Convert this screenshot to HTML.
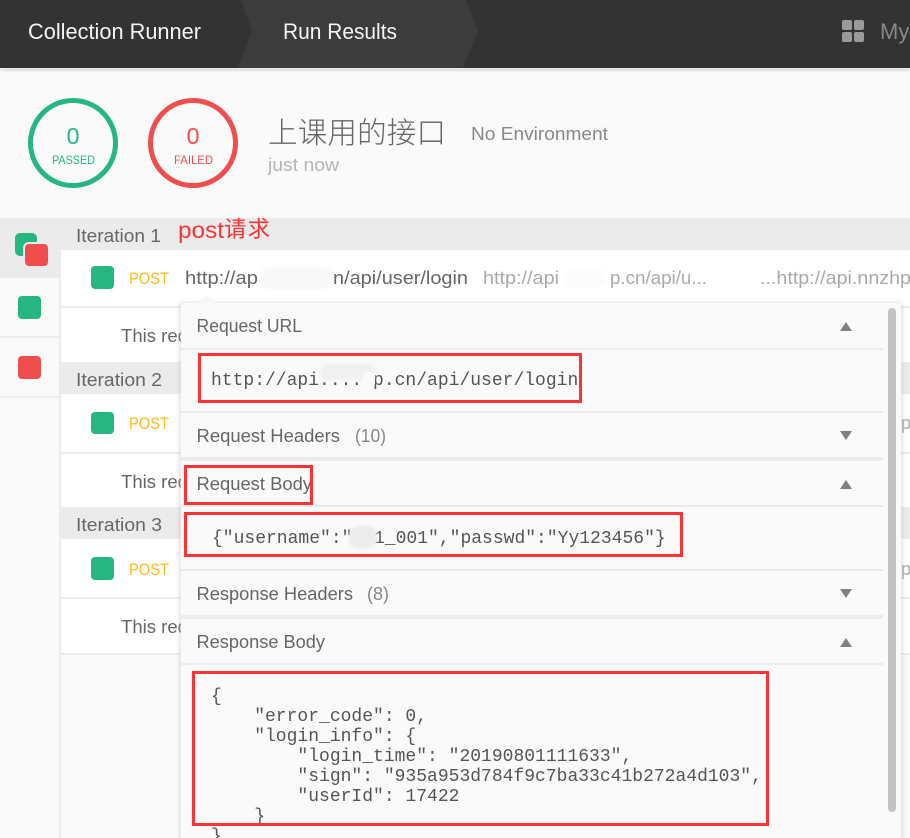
<!DOCTYPE html>
<html><head><meta charset="utf-8"><title>Run Results</title>
<style>
html,body{margin:0;padding:0;width:910px;height:838px;overflow:hidden;background:#fafafa}
svg{display:block}
text{font-family:"Liberation Sans","Noto Sans CJK SC",sans-serif;font-size:18px;fill:#5a5a5a}
.h{font-size:18px;fill:#666}
.m{font-family:"Liberation Mono",monospace;font-size:18px;fill:#555}
.p{font-size:16.5px;fill:#ffb81c}
.g{fill:#25b681}.r{fill:#f04e4c}
.l{fill:#aaa}
</style></head><body>
<svg width="910" height="838" viewBox="0 0 910 838" xmlns="http://www.w3.org/2000/svg">
<defs>
<filter id="b" x="-30%" y="-30%" width="160%" height="160%"><feGaussianBlur stdDeviation="1.5"/></filter>
<filter id="s" x="-5%" y="-5%" width="110%" height="110%"><feGaussianBlur stdDeviation="2"/></filter>
</defs>
<rect width="910" height="838" fill="#fafafa"/>
<!-- header -->
<rect y="68" width="910" height="3" fill="#d0d0d0" filter="url(#s)"/>
<rect width="910" height="68" fill="#333"/>
<polygon points="241,0 466,0 478,31 463,68 238,68 252,31" fill="#3c3c3c"/>
<text x="28" y="39" textLength="173" lengthAdjust="spacingAndGlyphs" style="font-size:22px;fill:#f4f4f4">Collection Runner</text>
<text x="283" y="39" textLength="114" lengthAdjust="spacingAndGlyphs" style="font-size:22px;fill:#f4f4f4">Run Results</text>
<rect x="842" y="20" width="10" height="10" rx="2" fill="#9a9a9a"/><rect x="854" y="20" width="10" height="10" rx="2" fill="#9a9a9a"/>
<rect x="842" y="32" width="10" height="10" rx="2" fill="#9a9a9a"/><rect x="854" y="32" width="10" height="10" rx="2" fill="#9a9a9a"/>
<text x="880" y="39" style="font-size:22px;fill:#888">My</text>
<!-- summary -->
<circle cx="73" cy="143" r="42.5" fill="none" stroke="#25b681" stroke-width="5"/>
<circle cx="193" cy="143" r="42.5" fill="none" stroke="#f04e4c" stroke-width="5"/>
<text x="73" y="144" text-anchor="middle" class="g" style="font-size:23px">0</text>
<text x="193" y="144" text-anchor="middle" class="r" style="font-size:23px">0</text>
<text x="52" y="164" textLength="43" lengthAdjust="spacingAndGlyphs" class="g" style="font-size:12px">PASSED</text>
<text x="174" y="164" textLength="39" lengthAdjust="spacingAndGlyphs" class="r" style="font-size:12px">FAILED</text>
<text x="268" y="143" textLength="178" style="font-size:29.5px;font-weight:300;fill:#666">上课用的接口</text>
<text x="471" y="140" textLength="137" lengthAdjust="spacingAndGlyphs" style="fill:#888">No Environment</text>
<text x="268" y="171" textLength="71" lengthAdjust="spacingAndGlyphs" style="fill:#b5b5b5">just now</text>
<!-- sidebar -->
<rect x="0" y="218" width="910" height="32" fill="#ebebeb"/>
<rect x="0" y="250" width="61" height="28" fill="#ebebeb"/>
<rect x="59" y="278" width="2" height="560" fill="#ececec"/>
<rect x="0" y="336" width="59" height="2" fill="#ececec"/>
<rect x="0" y="396" width="59" height="2" fill="#ececec"/>
<rect x="15" y="233" width="22" height="23" rx="5" fill="#25b681"/>
<rect x="23" y="242" width="27" height="26" rx="6" fill="#ebebeb"/>
<rect x="25" y="244" width="23" height="22" rx="4" fill="#f04e4c"/>
<rect x="18" y="296" width="23" height="23" rx="4" fill="#25b681"/>
<rect x="18" y="356" width="23" height="23" rx="4" fill="#f04e4c"/>
<!-- rows -->
<rect x="61" y="250" width="849" height="56" fill="#fff"/>
<rect x="61" y="306" width="849" height="2" fill="#ececec"/>
<rect x="61" y="308" width="849" height="54" fill="#fff"/>
<rect x="61" y="362" width="849" height="32" fill="#ebebeb"/>
<rect x="61" y="394" width="849" height="58" fill="#fff"/>
<rect x="61" y="452" width="849" height="2" fill="#ececec"/>
<rect x="61" y="454" width="849" height="53" fill="#fff"/>
<rect x="61" y="507" width="849" height="32" fill="#ebebeb"/>
<rect x="61" y="539" width="849" height="58" fill="#fff"/>
<rect x="61" y="597" width="849" height="2" fill="#ececec"/>
<rect x="61" y="599" width="849" height="54" fill="#fff"/>
<rect x="61" y="653" width="849" height="2" fill="#ececec"/>
<text x="76" y="242" textLength="85" lengthAdjust="spacingAndGlyphs" class="h">Iteration 1</text>
<text x="76" y="386" textLength="86" lengthAdjust="spacingAndGlyphs" class="h">Iteration 2</text>
<text x="76" y="531" textLength="86" lengthAdjust="spacingAndGlyphs" class="h">Iteration 3</text>
<rect x="91" y="266" width="23" height="23" rx="4" fill="#25b681"/>
<rect x="91" y="412" width="23" height="22" rx="4" fill="#25b681"/>
<rect x="91" y="557" width="23" height="23" rx="4" fill="#25b681"/>
<text x="129" y="284" textLength="40" lengthAdjust="spacingAndGlyphs" class="p">POST</text>
<text x="129" y="429" textLength="40" lengthAdjust="spacingAndGlyphs" class="p">POST</text>
<text x="129" y="575" textLength="40" lengthAdjust="spacingAndGlyphs" class="p">POST</text>
<text x="185" y="284" textLength="73" lengthAdjust="spacingAndGlyphs" class="h">http://ap</text>
<text x="333" y="284" textLength="135" lengthAdjust="spacingAndGlyphs" class="h">n/api/user/login</text>
<rect x="260" y="267" width="72" height="22" rx="10" fill="#f8f8f8" filter="url(#b)"/>
<text x="483" y="284" textLength="76" lengthAdjust="spacingAndGlyphs" class="l">http://api</text>
<text x="610" y="284" textLength="97" lengthAdjust="spacingAndGlyphs" class="l">p.cn/api/u...</text>
<rect x="565" y="268" width="40" height="20" rx="9" fill="#fbfbfb" filter="url(#b)"/>
<text x="760" y="284" class="l" textLength="151" lengthAdjust="spacingAndGlyphs">...http://api.nnzhp</text>
<text x="121" y="342" class="h" textLength="102" lengthAdjust="spacingAndGlyphs">This request</text>
<text x="121" y="488" class="h" textLength="102" lengthAdjust="spacingAndGlyphs">This request</text>
<text x="121" y="633" class="h" textLength="102" lengthAdjust="spacingAndGlyphs">This request</text>
<text x="901" y="429" class="l">p</text>
<text x="901" y="575" class="l">p</text>
<!-- annotation -->
<text x="178" y="238" textLength="46" lengthAdjust="spacingAndGlyphs" style="font-size:23px;fill:#f33">post</text>
<text x="224" y="237" textLength="46" style="font-size:22.5px;fill:#f33">请求</text>
<!-- panel -->
<rect x="179" y="302" width="724" height="540" rx="3" fill="#bbb" opacity=".4" filter="url(#s)"/>
<polygon points="197,303 207,295 217,303" fill="#f6f6f6"/>
<rect x="181" y="303" width="720" height="540" rx="3" fill="#fafafa"/>
<rect x="888" y="308" width="8" height="504" rx="4" fill="#c2c2c2"/>
<rect x="181" y="348" width="702" height="2" fill="#ececec"/>
<rect x="181" y="411" width="702" height="2" fill="#ececec"/>
<rect x="181" y="457" width="702" height="4" fill="#ececec"/>
<rect x="181" y="505" width="702" height="2" fill="#ececec"/>
<rect x="181" y="569" width="702" height="2" fill="#ececec"/>
<rect x="181" y="615" width="702" height="4" fill="#ececec"/>
<rect x="181" y="663" width="702" height="2" fill="#ececec"/>
<text x="196.5" y="332" textLength="105.5" lengthAdjust="spacingAndGlyphs" class="h">Request URL</text>
<text x="196.5" y="442" textLength="143.5" lengthAdjust="spacingAndGlyphs" class="h">Request Headers</text>
<text x="355" y="442" textLength="31" lengthAdjust="spacingAndGlyphs" style="fill:#888">(10)</text>
<text x="196.5" y="490" textLength="115.5" lengthAdjust="spacingAndGlyphs" class="h">Request Body</text>
<text x="196.5" y="600" textLength="156.5" lengthAdjust="spacingAndGlyphs" class="h">Response Headers</text>
<text x="367" y="600" textLength="22" lengthAdjust="spacingAndGlyphs" style="fill:#888">(8)</text>
<text x="196.5" y="648" textLength="128.5" lengthAdjust="spacingAndGlyphs" class="h">Response Body</text>
<polygon points="840,331 846,322 852,331" fill="#808080"/>
<polygon points="840,431 852,431 846,440" fill="#808080"/>
<polygon points="840,489 846,480 852,489" fill="#808080"/>
<polygon points="840,589 852,589 846,598" fill="#808080"/>
<polygon points="840,647 846,638 852,647" fill="#808080"/>
<text x="211" y="385" class="m" xml:space="preserve">http://api.... p.cn/api/user/login</text>
<rect x="320" y="364" width="56" height="16" rx="7" fill="#f0f0f0" filter="url(#b)"/>
<rect x="363" y="372" width="12" height="16" rx="5" fill="#fafafa"/>
<text x="212" y="543" class="m">{"username":"nn1_001","passwd":"Yy123456"}</text>
<rect x="349" y="526" width="28" height="22" rx="9" fill="#ececec" filter="url(#b)"/>
<g>
<text x="211" y="701" class="m">{</text>
<text x="211" y="721" class="m" xml:space="preserve">    "error_code": 0,</text>
<text x="211" y="741" class="m" xml:space="preserve">    "login_info": {</text>
<text x="211" y="761" class="m" xml:space="preserve">        "login_time": "20190801111633",</text>
<text x="211" y="781" class="m" xml:space="preserve">        "sign": "935a953d784f9c7ba33c41b272a4d103",</text>
<text x="211" y="801" class="m" xml:space="preserve">        "userId": 17422</text>
<text x="211" y="821" class="m" xml:space="preserve">    }</text>
<text x="211" y="841" class="m">}</text>
</g>
<!-- red boxes -->
<g fill="none" stroke="#f33" stroke-width="3">
<rect x="199.5" y="354.5" width="381" height="47"/>
<rect x="185.5" y="466.5" width="126" height="37"/>
<rect x="185.5" y="513.5" width="496" height="42"/>
<rect x="193.5" y="672.5" width="574" height="152"/>
</g>
</svg>
</body></html>
